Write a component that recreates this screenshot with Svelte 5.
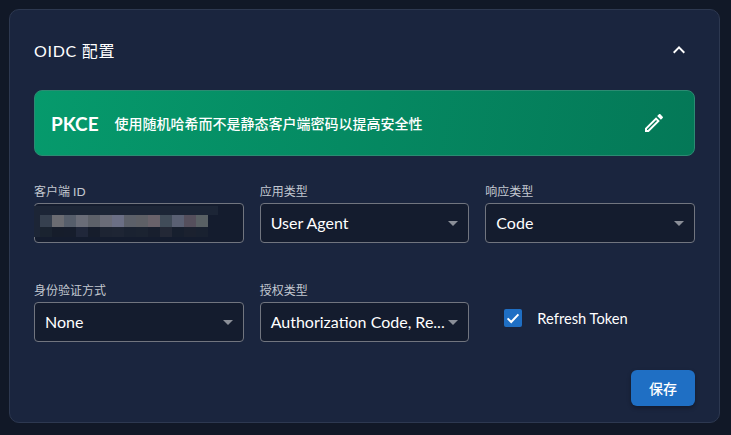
<script>
  const mid = ['#36404f', '#6b6c72', '#565e6b', '#6a6d78', '#5d6169', '#6a6c78', '#6b6f85', '#5c6069', '#5e6066', '#69626a', '#414c59', '#5a6073', '#554f5c', '#596064'];
  const low = ['#1a2330', '#161d2b', '#161d2c', '#20273a', '#161d2c', '#1d2433', '#1e2534', '#1a2231', '#1b2331', '#181f2e', '#232836', '#171f2e', '#1b212f', '#192130'];
</script>

<div class="card">
  <header class="head">
    <h2>OIDC 配置</h2>
    <svg class="chevron" viewBox="0 0 24 24" width="24" height="24"><path d="M7.41 15.41 12 10.83l4.59 4.58L18 14l-6-6-6 6z" /></svg>
  </header>

  <section class="banner">
    <strong>PKCE</strong>
    <span>使用随机哈希而不是静态客户端密码以提高安全性</span>
    <svg class="pencil" viewBox="0 0 24 24" width="24" height="24"><path d="M14.06 9 15 9.94 5.92 19H5v-.92L14.06 9m3.6-6c-.25 0-.51.1-.7.29l-1.83 1.83 3.75 3.75 1.83-1.83c.39-.39.39-1.04 0-1.41l-2.34-2.34c-.2-.2-.45-.29-.71-.29m-3.6 3.19L3 17.25V21h3.75L17.81 9.94l-3.75-3.75z" /></svg>
  </section>

  <div class="row first">
    <div class="field">
      <label>客户端 ID</label>
      <div class="box">
        <div class="mosaic">
          <div class="strip top"></div>
          <div class="strip">
            <i class="pad"></i>
            {#each mid as c}<i style="background:{c}"></i>{/each}
          </div>
          <div class="strip">
            <i class="pad"></i>
            {#each low as c}<i style="background:{c}"></i>{/each}
          </div>
        </div>
      </div>
    </div>
    <div class="field">
      <label>应用类型</label>
      <div class="box"><span class="value">User Agent</span><b class="caret"></b></div>
    </div>
    <div class="field">
      <label>响应类型</label>
      <div class="box"><span class="value">Code</span><b class="caret"></b></div>
    </div>
  </div>

  <div class="row">
    <div class="field">
      <label>身份验证方式</label>
      <div class="box"><span class="value">None</span><b class="caret"></b></div>
    </div>
    <div class="field">
      <label>授权类型</label>
      <div class="box"><span class="value">Authorization Code, Re...</span><b class="caret"></b></div>
    </div>
    <div class="check">
      <span class="tick">
        <svg viewBox="0 0 18 18" width="18" height="18"><path d="M3.6 9.4 7.2 13l7.2-7.6" /></svg>
      </span>
      <span>Refresh Token</span>
    </div>
  </div>

  <footer class="foot">
    <button>保存</button>
  </footer>
</div>

<style>
  :global(body) {
    background: #111827;
    font-family: Lato, "Noto Sans CJK SC", sans-serif;
  }
  .card {
    box-sizing: border-box;
    width: 711px;
    height: 414px;
    margin: 9px 0 0 9px;
    padding: 0 24px;
    background: #1a253e;
    border: 1px solid #2d3850;
    border-radius: 10px;
  }
  .head {
    display: flex;
    justify-content: space-between;
    align-items: center;
    height: 80px;
  }
  h2 {
    margin: 0;
    font-size: 16px;
    font-weight: 400;
    letter-spacing: 0.7px;
    color: #fff;
  }
  .chevron {
    margin-right: 4px;
    fill: #fff;
  }
  .banner {
    display: flex;
    align-items: center;
    box-sizing: border-box;
    height: 66px;
    padding: 0 16px;
    color: #fff;
    background: linear-gradient(100deg, #069a6c, #047857);
    border: 1px solid #2c8b72;
    border-radius: 8px;
  }
  .banner strong {
    font-size: 19px;
    font-weight: 700;
    margin-right: 16px;
  }
  .banner span {
    font-size: 14px;
    font-weight: 500;
  }
  .pencil {
    margin-left: auto;
    margin-right: 12px;
    fill: #fff;
  }
  .row {
    display: grid;
    grid-template-columns: repeat(3, minmax(0, 1fr));
    gap: 16px;
    margin-top: 39px;
  }
  .row.first {
    margin-top: 27px;
  }
  .field label {
    display: block;
    height: 20px;
    padding-top: 1px;
    box-sizing: border-box;
    font-size: 12px;
    line-height: 16px;
    color: #c3c8d0;
  }
  .box {
    position: relative;
    display: flex;
    align-items: center;
    box-sizing: border-box;
    height: 40px;
    padding: 0 10px;
    background: #141c2e;
    border: 1px solid #71757f;
    border-radius: 4px;
    color: #fff;
    font-size: 16px;
  }
  .value {
    flex: 1;
    min-width: 0;
    margin-bottom: 2px;
    white-space: nowrap;
  }
  .caret {
    flex: none;
    width: 0;
    height: 0;
    border: 5px solid transparent;
    border-top-color: #8b8f98;
    border-bottom: 0;
  }
  .mosaic {
    position: absolute;
    left: -1px;
    top: 2px;
    width: 184px;
    height: 31px;
  }
  .strip {
    display: flex;
    height: 12px;
  }
  .strip.top {
    height: 9px;
    background: #1c2536;
  }
  .strip:last-child {
    height: 10px;
  }
  .strip i {
    display: block;
    width: 12px;
  }
  .strip i.pad {
    width: 6px;
    background: #1c2536;
  }
  .check {
    display: flex;
    align-items: center;
    gap: 15px;
    height: 40px;
    margin-top: 12px;
    padding-left: 19px;
    align-self: center;
    font-size: 14.7px;
    color: #fff;
  }
  .tick {
    display: block;
    width: 18px;
    height: 18px;
    background: #1f6fc4;
    border-radius: 2px;
  }
  .tick path {
    fill: none;
    stroke: #fff;
    stroke-width: 2;
  }
  .foot {
    display: flex;
    justify-content: flex-end;
    margin-top: 28px;
  }
  button {
    width: 64px;
    height: 36px;
    border: 0;
    border-radius: 6px;
    background: #1f6fc4;
    color: #fff;
    font: 500 14px Lato, "Noto Sans CJK SC", sans-serif;
    box-shadow: 0 2px 4px rgba(0, 0, 0, 0.3);
  }
</style>
